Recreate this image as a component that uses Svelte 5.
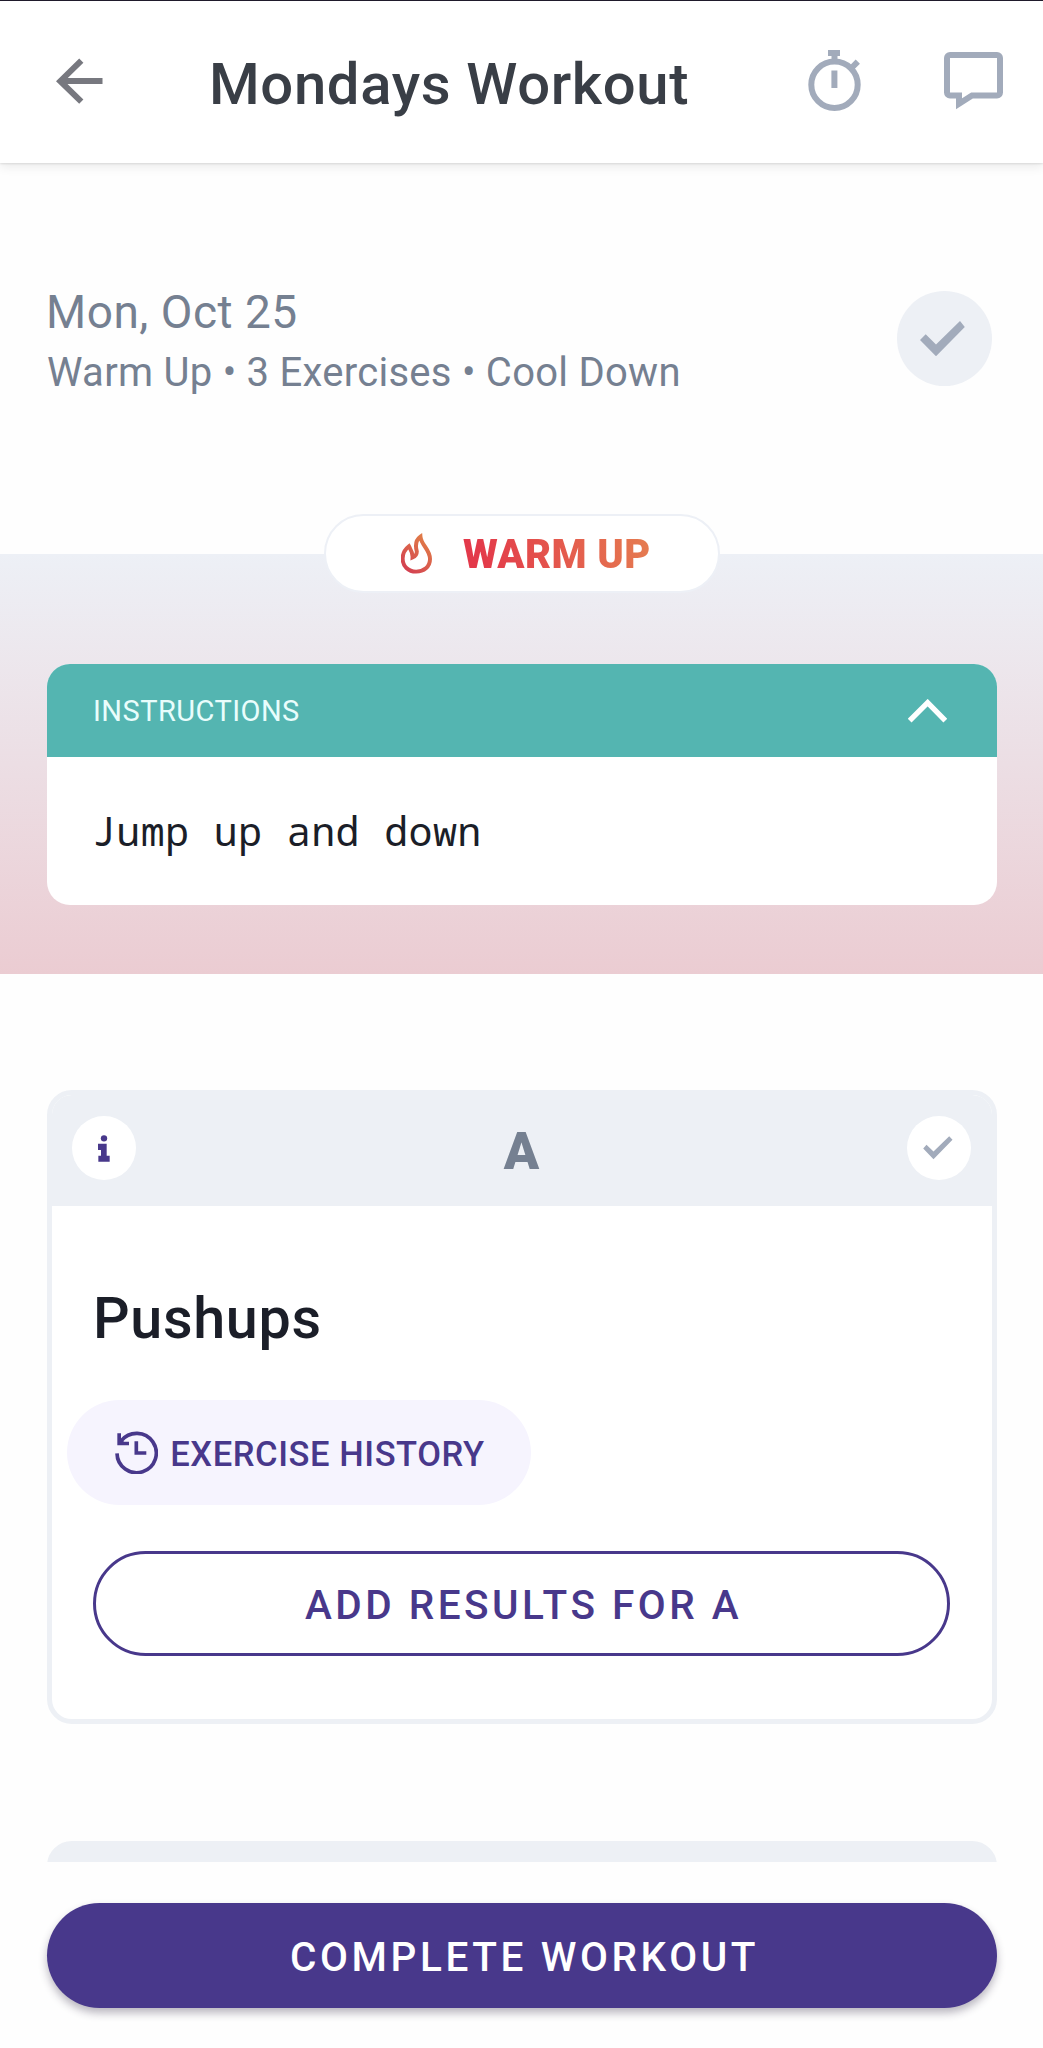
<script>
  const workout = {
    title: 'Mondays Workout',
    date: 'Mon, Oct 25',
    summary: 'Warm Up • 3 Exercises • Cool Down',
    instructions: 'Jump up and down',
    exercise: { label: 'A', name: 'Pushups' }
  };
</script>

<div class="screen">
  <header class="topbar">
    <button class="icon-button" aria-label="Back">
      <svg class="arrow" viewBox="56 58 47 47" width="47" height="47">
        <path d="M102.5 81H60.5M81.3 60.7 60.3 81.2 81.3 101.7" />
      </svg>
    </button>
    <h1>{workout.title}</h1>
    <button class="icon-button" aria-label="Timer">
      <svg class="muted" viewBox="808 50 54 62" width="54" height="62">
        <circle cx="834.5" cy="84.8" r="23.2" />
        <path d="M828 53h12M834.5 55v6M834.4 70.5V88M851 68.5l6.8-6.8" />
      </svg>
    </button>
    <button class="icon-button" aria-label="Comments">
      <svg class="muted" viewBox="944 53 59 58" width="59" height="58">
        <path d="M950 56H997a3 3 0 0 1 3 3V93.5a3 3 0 0 1-3 3H972L959 104.7V96.5H950a3 3 0 0 1-3-3V59a3 3 0 0 1 3-3Z" />
      </svg>
    </button>
  </header>

  <main>
    <section class="summary">
      <div class="summary-text">
        <p class="date">{workout.date}</p>
        <p class="parts">{workout.summary}</p>
      </div>
      <div class="status">
        <svg viewBox="920 322 45 36" width="45" height="36">
          <polygon points="920,341 925.7,335.3 936,345.5 960,322 964.8,328 936,357.3" />
        </svg>
      </div>
    </section>

    <section class="warmup">
      <div class="pill">
        <svg viewBox="303 129 94 122" width="31" height="41">
          <defs>
            <linearGradient id="flame" x1="0" y1="1" x2="0.7" y2="0">
              <stop offset="0" stop-color="#d23b52" />
              <stop offset="1" stop-color="#e07a48" />
            </linearGradient>
          </defs>
          <path
            d="M362 139C364 165 391 177 391 207C391 231 372 245 349 245C325 245 308 229 308 205C308 187 317 176 327 168C331 176 339 185 338 202C346 199 351 192 351 184C346 166 348 149 362 139Z"
            stroke="url(#flame)"
          />
        </svg>
        <span>WARM UP</span>
      </div>
      <div class="instructions">
        <div class="instructions-head">
          <span>INSTRUCTIONS</span>
          <svg viewBox="203 172 118 72" width="39.3" height="24">
            <path d="M208 237 262 183 315 237" />
          </svg>
        </div>
        <p>{workout.instructions}</p>
      </div>
    </section>

    <article class="exercise">
      <div class="exercise-head">
        <div class="dot">
          <svg class="info" viewBox="198 190 35 81" width="11.7" height="27">
            <circle cx="216" cy="200" r="9.5" />
            <path d="M198 216H224V252H233V270H199V252H207V235H198Z" />
          </svg>
        </div>
        <span class="label">{workout.exercise.label}</span>
        <div class="dot">
          <svg viewBox="922.5 1137.5 30 23.5" width="30" height="23.5">
            <polygon points="922.7,1150 926,1146.3 933,1153 948.7,1137.7 952,1141.3 933,1160.7" />
          </svg>
        </div>
      </div>
      <h2>{workout.exercise.name}</h2>
      <button class="history">
        <svg viewBox="224 152 130 131" width="43.3" height="43.7">
          <path class="ring" d="M230 219A59 59 0 1 0 243 181" />
          <path class="head" d="M231 159H242V176L251 184H266V195H231Z" />
          <path class="hands" d="M288 183V218H318" />
        </svg>
        <span>EXERCISE HISTORY</span>
      </button>
      <button class="add">ADD RESULTS FOR {workout.exercise.label}</button>
    </article>

    <article class="exercise next"></article>
  </main>

  <footer>
    <button class="complete">COMPLETE WORKOUT</button>
  </footer>
</div>

<style>
  :global(body) {
    margin: 0;
    background: #fefefe;
  }
  .screen {
    box-sizing: border-box;
    width: 100%;
    height: 2048px;
    display: flex;
    flex-direction: column;
    overflow: hidden;
    background: #fefefe;
    font-family: Roboto, sans-serif;
  }
  .screen * {
    box-sizing: border-box;
  }
  h1, h2, p {
    margin: 0;
    font-weight: 400;
  }
  button {
    margin: 0;
    padding: 0;
    border: 0;
    background: none;
    font: inherit;
  }
  svg {
    display: block;
    flex: none;
  }

  .topbar {
    flex: none;
    position: relative;
    height: 163px;
    padding: 0 40px 2px 56px;
    display: flex;
    align-items: center;
    border-top: 1px solid #1f1a2b;
    background: #fff;
    box-shadow: 0 1px 2px rgba(0, 0, 0, 0.1), 0 4px 10px rgba(0, 0, 0, 0.08);
  }
  .topbar h1 {
    flex: 1;
    margin-left: 106px;
    padding-top: 5px;
    font-size: 58px;
    font-weight: 500;
    line-height: 68px;
    letter-spacing: 0.65px;
    color: #393e46;
  }
  .topbar .icon-button + .icon-button {
    margin-left: 82px;
  }
  .arrow {
    fill: none;
    stroke: #77787f;
    stroke-width: 6;
  }
  .muted {
    fill: none;
    stroke: #a2abbb;
    stroke-width: 6;
  }

  main {
    flex: 1;
    min-height: 0;
    overflow: hidden;
  }

  .summary {
    height: 391px;
    padding: 119px 51px 0 46px;
    display: flex;
    justify-content: space-between;
    color: #758091;
  }
  .date {
    font-size: 46px;
    line-height: 60px;
    letter-spacing: 0.5px;
  }
  .parts {
    padding: 2px 0 0 1px;
    font-size: 40px;
    line-height: 57px;
    letter-spacing: 0.27px;
  }
  .status {
    width: 95px;
    height: 95px;
    margin-top: 9px;
    padding: 0 4px 0 0;
    display: flex;
    align-items: center;
    justify-content: center;
    border-radius: 50%;
    background: #edf0f5;
    fill: #a2abbb;
  }

  .warmup {
    height: 420px;
    padding: 0 46px 0 47px;
    display: flex;
    flex-direction: column;
    align-items: center;
    background: linear-gradient(#edf0f6, #ebccd2);
  }
  .pill {
    width: 396px;
    height: 79px;
    margin-top: -40px;
    padding-left: 75px;
    display: flex;
    align-items: center;
    gap: 31px;
    border: 2px solid #edf0f6;
    border-radius: 40px;
    background: #fff;
  }
  .pill path {
    fill: none;
    stroke-width: 12;
    stroke-linejoin: miter;
  }
  .pill span {
    padding-top: 3px;
    font-size: 40px;
    font-weight: 900;
    line-height: 48px;
    letter-spacing: 0.4px;
    color: transparent;
    background: linear-gradient(75deg, #e3394a 10%, #e57a50 95%);
    background-clip: text;
  }
  .instructions {
    width: 100%;
    height: 241px;
    margin-top: 71px;
    overflow: hidden;
    border-radius: 23px;
    background: #fff;
  }
  .instructions-head {
    height: 93px;
    padding: 1px 50px 0 46px;
    display: flex;
    align-items: center;
    justify-content: space-between;
    background: #54b5b1;
    color: #e9fdfc;
    font-size: 29px;
    letter-spacing: 0.45px;
  }
  .instructions-head path {
    fill: none;
    stroke: #fff;
    stroke-width: 16;
  }
  .instructions p {
    padding: 45px 45px;
    font-family: 'Noto Sans Mono', 'DejaVu Sans Mono', monospace;
    font-size: 40px;
    line-height: 58px;
    letter-spacing: 0.35px;
    color: #1b1e28;
  }

  .exercise {
    height: 634px;
    margin: 116px 46px 0 47px;
    display: flex;
    flex-direction: column;
    align-items: flex-start;
    overflow: hidden;
    border: 5px solid #edf0f5;
    border-radius: 25px;
    background: #fff;
  }
  .exercise.next {
    margin-top: 117px;
    background: #edf0f5;
  }
  .exercise-head {
    align-self: stretch;
    height: 111px;
    padding: 21px 21px 0 20px;
    display: flex;
    justify-content: space-between;
    background: #edf0f5;
  }
  .dot {
    width: 64px;
    height: 64px;
    display: flex;
    align-items: center;
    justify-content: center;
    border-radius: 50%;
    background: #fff;
    fill: #a2abbb;
  }
  .dot:last-child {
    padding-right: 2px;
  }
  .info {
    fill: #48388b;
  }
  .label {
    padding-top: 5px;
    font-size: 52px;
    font-weight: 900;
    line-height: 62px;
    color: #758091;
  }
  .exercise h2 {
    margin: 79px 0 0 41px;
    font-size: 57.5px;
    font-weight: 500;
    line-height: 68px;
    letter-spacing: 0.65px;
    color: #1b1e28;
  }
  .history {
    width: 464px;
    height: 105px;
    margin: 47px 0 0 15px;
    padding-left: 48px;
    display: flex;
    align-items: center;
    gap: 12px;
    border-radius: 53px;
    background: #f6f4fe;
    color: #48388b;
    font-size: 34.5px;
    font-weight: 500;
    letter-spacing: 0.58px;
  }
  .history span {
    padding-top: 3px;
  }
  .ring, .hands {
    fill: none;
    stroke: #48388b;
    stroke-width: 11;
  }
  .head {
    fill: #48388b;
  }
  .add, .complete {
    height: 105px;
    border-radius: 53px;
    font-size: 40.5px;
    font-weight: 500;
    text-align: center;
  }
  .add {
    width: 857px;
    margin: 46px 0 0 41px;
    padding: 2px 0 0 4px;
    border: 3px solid #48388b;
    color: #48388b;
    letter-spacing: 3.5px;
  }

  footer {
    flex: none;
    height: 186px;
    padding: 41px 46px 0 47px;
    background: #fefefe;
  }
  .complete {
    width: 100%;
    padding: 2px 0 0 5px;
    background: #48388b;
    color: #fff;
    letter-spacing: 3.6px;
    box-shadow: 0 5px 8px rgba(40, 30, 60, 0.32);
  }
</style>
